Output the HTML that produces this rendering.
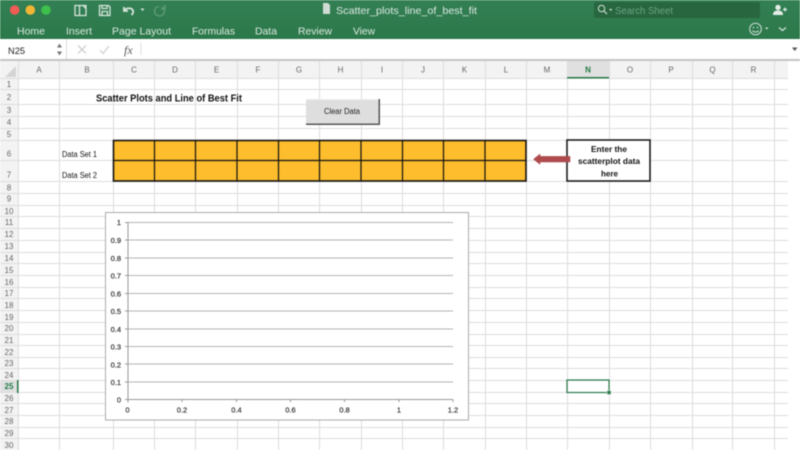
<!DOCTYPE html>
<html><head><meta charset="utf-8"><style>
html,body{margin:0;padding:0;background:#fff;width:800px;height:450px;overflow:hidden}
svg{display:block;filter:blur(.4px)}
text{font-family:"Liberation Sans",sans-serif}
.t{fill:#dbe9e0;font-size:10.5px}
.h{fill:#666;font-size:8px;text-anchor:middle}
.r{fill:#666;font-size:8px;text-anchor:middle}
.k{fill:#111;font-size:8px}
.b{fill:#111;font-size:8px;font-weight:bold}
.a{fill:#333;font-size:7.5px;stroke:#333;stroke-width:.2px}
</style></head><body>
<svg width="800" height="450" viewBox="0 0 800 450" xmlns="http://www.w3.org/2000/svg">
<defs><linearGradient id="g" x1="0" y1="0" x2="0" y2="1"><stop offset="0" stop-color="#348055"/><stop offset="1" stop-color="#2b784a"/></linearGradient></defs>
<rect width="800" height="450" fill="#fff"/>
<rect width="800" height="39" fill="url(#g)"/>
<circle cx="14.700" cy="10" r="4.800" fill="#ef5b55"/><circle cx="30.300" cy="10" r="4.800" fill="#f3b535"/><circle cx="46" cy="10" r="4.800" fill="#3dc04c"/>
<g fill="none" stroke="#d5e5da" stroke-width="1.300">
<path d="M75 5.500h11v10h-11zM79.500 5.500v10M83 5.500l3 3"/>
<path d="M99.500 5.500h9l1.500 1.500v8.500h-10.500zM102 5.500v3h5v-3M102 15.500v-4h5.500v4"/>
<path d="M124 7v4h4M124.500 10.500c2-3 7-3 8.500 0 .5 1.500 0 3-1.500 4.500" stroke-width="1.800"/>
<path d="M159 6.500c-3 0-4.500 2.500-4.500 4.500a5 5 0 0 0 10 0c0-2-1-3.500-2.500-4.500M165 5v4h-4" stroke="#5f9c78"/>
</g>
<path d="M140.500 8.500h4l-2 2.500z" fill="#d5e5da"/>
<path d="M323 3h5l2 2v9h-7z" fill="#cfdcd4"/>
<text x="336" y="14" class="t" textLength="141" lengthAdjust="spacingAndGlyphs">Scatter_plots_line_of_best_fit</text>
<rect x="594" y="2" width="166" height="16" rx="2" fill="#27663f"/>
<circle cx="601.500" cy="8.500" r="3.200" fill="none" stroke="#cfe0d5" stroke-width="1"/><path d="M604 11l3 3" stroke="#cfe0d5" stroke-width="1.200"/><path d="M609 9h3.500l-1.750 2z" fill="#cfe0d5"/>
<text x="615" y="14" fill="#6da584" font-size="10.500" textLength="58" lengthAdjust="spacingAndGlyphs">Search Sheet</text>
<circle cx="778" cy="7.500" r="2.700" fill="#e3ede7"/><path d="M773 15c0-3.500 2-4.500 5-4.500s5 1 5 4.500z" fill="#e3ede7"/><path d="M783 9.500h4M785 7.500v4" stroke="#e3ede7" stroke-width="1.200"/>
<circle cx="755.500" cy="29" r="5.800" fill="none" stroke="#cfe0d5" stroke-width="1"/><circle cx="753.500" cy="27.500" r=".8" fill="#cfe0d5"/><circle cx="757.500" cy="27.500" r=".8" fill="#cfe0d5"/><path d="M752.500 30.500c1 2 5 2 6 0" fill="none" stroke="#cfe0d5"/>
<path d="M765 27.500h3.500l-1.750 2z" fill="#cfe0d5"/><path d="M779 27.500l3.500 3 3.500-3" fill="none" stroke="#cfe0d5" stroke-width="1.300"/>
<text x="17" y="34.500" class="t" textLength="28" lengthAdjust="spacingAndGlyphs">Home</text>
<text x="66" y="34.500" class="t" textLength="26" lengthAdjust="spacingAndGlyphs">Insert</text>
<text x="112" y="34.500" class="t" textLength="59" lengthAdjust="spacingAndGlyphs">Page Layout</text>
<text x="192" y="34.500" class="t" textLength="43" lengthAdjust="spacingAndGlyphs">Formulas</text>
<text x="255" y="34.500" class="t" textLength="22" lengthAdjust="spacingAndGlyphs">Data</text>
<text x="298" y="34.500" class="t" textLength="34" lengthAdjust="spacingAndGlyphs">Review</text>
<text x="353" y="34.500" class="t" textLength="22" lengthAdjust="spacingAndGlyphs">View</text>
<rect y="39" width="800" height="20" fill="#fff"/>
<text x="8" y="54" fill="#222" font-size="9.500" textLength="17" lengthAdjust="spacingAndGlyphs">N25</text>
<path d="M57 47.500l2.500-4 2.500 4zM57 51.500h5l-2.500 4z" fill="#777"/>
<path d="M66.500 39v20M141 43v12" stroke="#ddd"/>
<path d="M78 45.500l8 8M86 45.500l-8 8M100 50l3 3.500 6-7.500" fill="none" stroke="#d0d0d0" stroke-width="1.300"/>
<text x="124" y="54" fill="#555" font-size="12" font-style="italic" style="font-family:'Liberation Serif',serif">fx</text>
<path d="M792 47.500h5.500l-2.750 3.500z" fill="#555"/>
<rect y="59" width="800" height="2" fill="#c4c4c4"/>
<rect y="61" width="788" height="17" fill="#f3f3f3"/>
<rect y="78" width="18" height="372" fill="#f3f3f3"/>
<path d="M16 66v11H5z" fill="#d5d5d5"/>
<rect x="567.500" y="61" width="41.500" height="17" fill="#e0e0e0"/>
<rect x="0" y="380.500" width="18" height="12" fill="#e0e0e0"/>
<path d="M18.500 61v389M59.500 61v389M113.500 61v389M154.500 61v389M195.500 61v389M237.500 61v389M278.500 61v389M319.500 61v389M361.500 61v389M402.500 61v389M443.500 61v389M485.500 61v389M526.500 61v389M567.500 61v389M609.500 61v389M650.500 61v389M692.500 61v389M732.500 61v389M774.500 61v389" stroke="#dcdcdc" fill="none"/>
<path d="M0 78.500h788M0 89.500h788M0 104.500h788M0 116.500h788M0 128.500h788M0 140.500h788M0 160.500h788M0 181.500h788M0 193.500h788M0 205.500h788M0 216.500h788M0 228.500h788M0 240.500h788M0 252.500h788M0 263.500h788M0 275.500h788M0 287.500h788M0 298.500h788M0 310.500h788M0 322.500h788M0 334.500h788M0 345.500h788M0 357.500h788M0 368.500h788M0 380.500h788M0 392.500h788M0 403.500h788M0 415.500h788M0 427.500h788M0 438.500h788" stroke="#dcdcdc" fill="none"/>
<g>
<text x="39" y="72.500" class="h">A</text><text x="87" y="72.500" class="h">B</text><text x="134" y="72.500" class="h">C</text><text x="175" y="72.500" class="h">D</text><text x="216.500" y="72.500" class="h">E</text><text x="258" y="72.500" class="h">F</text><text x="299" y="72.500" class="h">G</text><text x="340.500" y="72.500" class="h">H</text><text x="382" y="72.500" class="h">I</text><text x="423" y="72.500" class="h">J</text><text x="464.500" y="72.500" class="h">K</text><text x="506" y="72.500" class="h">L</text><text x="547" y="72.500" class="h">M</text>
<text x="588" y="72.500" class="h" style="fill:#1f7a45;font-weight:bold">N</text><text x="630" y="72.500" class="h">O</text><text x="671" y="72.500" class="h">P</text><text x="712.500" y="72.500" class="h">Q</text><text x="753.500" y="72.500" class="h">R</text>
</g>
<rect x="567" y="77" width="42" height="1.500" fill="#2b7a4b"/>
<rect x="17" y="380" width="1.500" height="13" fill="#2b7a4b"/>
<g>
<text x="9" y="87" class="r">1</text><text x="9" y="100" class="r">2</text><text x="9" y="113" class="r">3</text><text x="9" y="125" class="r">4</text><text x="9" y="137" class="r">5</text><text x="9" y="156.500" class="r">6</text><text x="9" y="177.500" class="r">7</text><text x="9" y="190.500" class="r">8</text><text x="9" y="201.500" class="r">9</text>
<text x="9" y="214" class="r">10</text><text x="9" y="225" class="r">11</text><text x="9" y="237" class="r">12</text><text x="9" y="249" class="r">13</text><text x="9" y="261" class="r">14</text><text x="9" y="273" class="r">15</text><text x="9" y="285" class="r">16</text><text x="9" y="296" class="r">17</text><text x="9" y="308" class="r">18</text><text x="9" y="320" class="r">19</text><text x="9" y="331" class="r">20</text><text x="9" y="343" class="r">21</text><text x="9" y="355" class="r">22</text><text x="9" y="366" class="r">23</text><text x="9" y="378" class="r">24</text><text x="9" y="389" class="r" style="fill:#1f7a45;font-weight:bold">25</text><text x="9" y="401" class="r">26</text><text x="9" y="413" class="r">27</text><text x="9" y="424" class="r">28</text><text x="9" y="436" class="r">29</text><text x="9" y="448" class="r">30</text>
</g>
<text x="96" y="101.500" fill="#111" font-size="10" font-weight="bold" textLength="146" lengthAdjust="spacingAndGlyphs">Scatter Plots and Line of Best Fit</text>
<text x="62" y="157" class="k" textLength="35" lengthAdjust="spacingAndGlyphs">Data Set 1</text>
<text x="62" y="178" class="k" textLength="35" lengthAdjust="spacingAndGlyphs">Data Set 2</text>
<rect x="306" y="99" width="74" height="26" fill="#555"/>
<rect x="306" y="99" width="72.500" height="24.500" fill="#dedede"/>
<rect x="306" y="99" width="72.500" height="1" fill="#eee"/>
<text x="324" y="114" fill="#222" font-size="8" textLength="36" lengthAdjust="spacingAndGlyphs">Clear Data</text>
<rect x="113.500" y="140.500" width="412.500" height="40.500" fill="#fdbd2d" stroke="#111" stroke-width="1.600"/>
<path d="M154.500 140v41M195.500 140v41M237 140v41M278.500 140v41M319.500 140v41M361 140v41M402.500 140v41M443.500 140v41M485 140v41M113 160.500h413" stroke="#111" stroke-width="1.200"/>
<rect x="567" y="140" width="83" height="41" fill="#fff" stroke="#111" stroke-width="1.500"/>
<path d="M533.500 159.200l6.500-5.200v2.400h30v5.600h-30v2.400z" fill="#b04a4c" stroke="#a14a4a" stroke-width=".5"/>
<text x="591" y="152" class="b" textLength="36" lengthAdjust="spacingAndGlyphs">Enter the</text>
<text x="578" y="164" class="b" textLength="62" lengthAdjust="spacingAndGlyphs">scatterplot data</text>
<text x="601" y="176.500" class="b" textLength="17" lengthAdjust="spacingAndGlyphs">here</text>
<rect x="105.500" y="212.500" width="363" height="207.500" fill="#fff" stroke="#aaa" stroke-width="1"/>
<path d="M128 222.500h325M128 240h325M128 258h325M128 275.500h325M128 293.500h325M128 311h325M128 329h325M128 346.500h325M128 364h325M128 382h325" stroke="#b3b3b3" fill="none" stroke-width="1"/>
<path d="M128 222v178M125 222.500h3M125 240h3M125 258h3M125 275.500h3M125 293.500h3M125 311h3M125 329h3M125 346.500h3M125 364h3M125 382h3M125 399.500h3M125 399.500h328M128 399.500v3M182 399.500v2.500M236.500 399.500v2.500M290.500 399.500v2.500M344.500 399.500v2.500M399 399.500v2.500M453 399.500v2.500" stroke="#999" fill="none" stroke-width="1"/>
<g text-anchor="end">
<text x="121" y="225" class="a">1</text><text x="121" y="243" class="a">0.9</text><text x="121" y="261" class="a">0.8</text><text x="121" y="278.500" class="a">0.7</text><text x="121" y="296.500" class="a">0.6</text><text x="121" y="314" class="a">0.5</text><text x="121" y="332" class="a">0.4</text><text x="121" y="349.500" class="a">0.3</text><text x="121" y="367.500" class="a">0.2</text><text x="121" y="385" class="a">0.1</text><text x="121" y="402.500" class="a">0</text>
</g>
<g text-anchor="middle">
<text x="127.500" y="412.500" class="a">0</text><text x="182" y="412.500" class="a">0.2</text><text x="236.500" y="412.500" class="a">0.4</text><text x="290.500" y="412.500" class="a">0.6</text><text x="344.500" y="412.500" class="a">0.8</text><text x="399" y="412.500" class="a">1</text><text x="453" y="412.500" class="a">1.2</text>
</g>
<rect x="567" y="380" width="42" height="12.500" fill="none" stroke="#2b7a4b" stroke-width="1.200"/>
<rect x="607" y="390.500" width="4" height="4" fill="#2b7a4b" stroke="#fff" stroke-width=".5"/>
</svg>
</body></html>
